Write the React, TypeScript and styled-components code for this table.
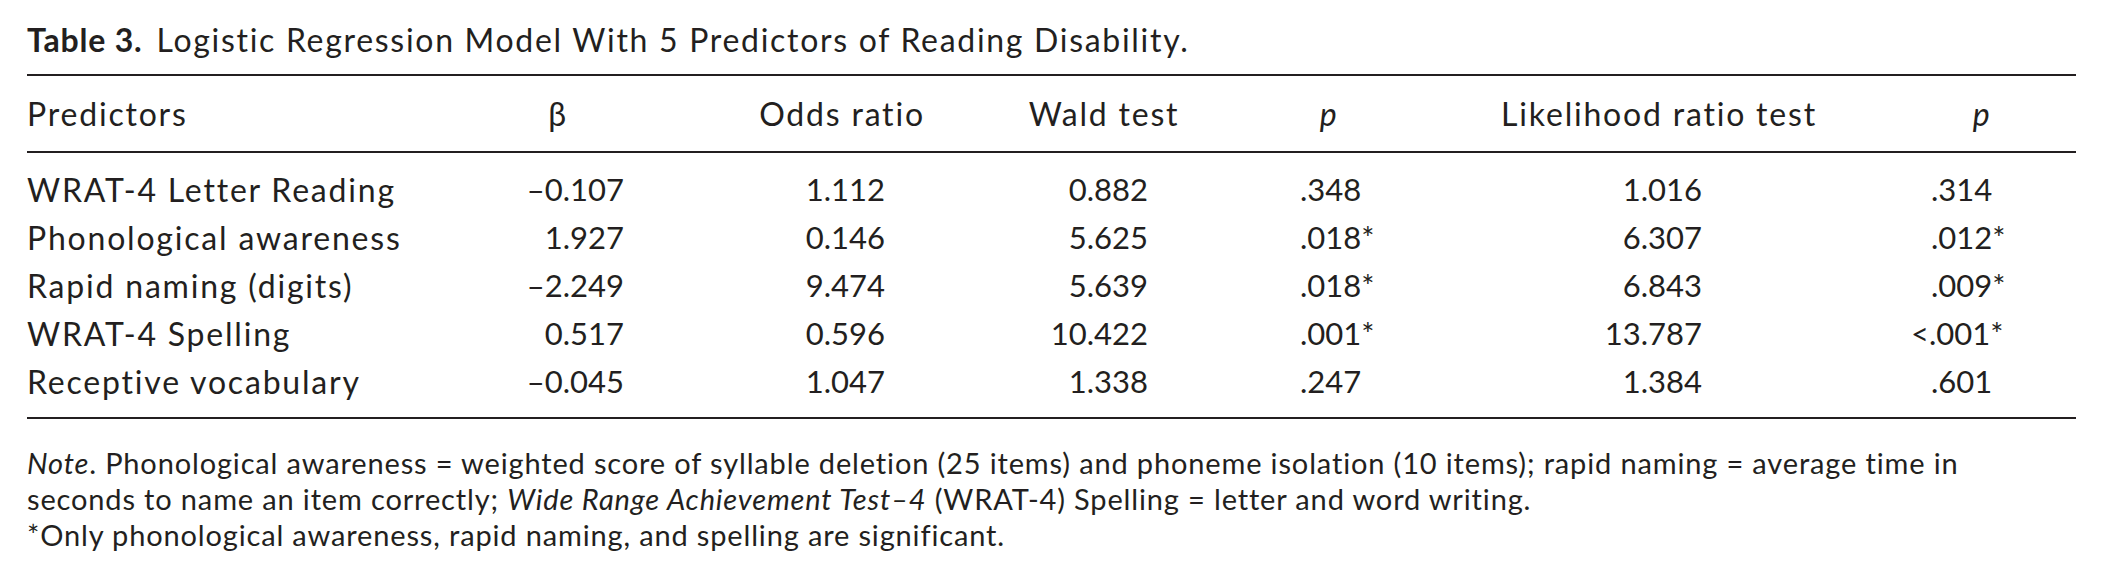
import React from 'react';
import styled, { createGlobalStyle } from 'styled-components';

const GlobalStyle = createGlobalStyle`
  html, body {
    margin: 0;
    padding: 0;
    background: #ffffff;
  }
  body {
    font-family: Lato, "Noto Sans", "Liberation Sans", sans-serif;
    color: #231f20;
  }
`;

type Align = 'left' | 'right' | 'center';

interface Col {
  head: Align;
  body: Align;
  pl?: number;
  pr?: number;
  hpl?: number;
}

// column widths follow the printed table, left edge to right rule
const widths = [443, 166, 402, 118, 330, 328, 262];

const cols: Col[] = [
  { head: 'left', body: 'left' },
  { head: 'center', body: 'right', pr: 12, hpl: 10 },
  { head: 'center', body: 'right', pr: 153, hpl: 10 },
  { head: 'center', body: 'right', pr: 8, hpl: 14 },
  { head: 'center', body: 'left', pl: 144, hpl: 16 },
  { head: 'center', body: 'right', pr: 112, hpl: 18 },
  { head: 'center', body: 'left', pl: 117, hpl: 74 },
];

const justify: Record<Align, string> = {
  left: 'flex-start',
  right: 'flex-end',
  center: 'center',
};

const rows: string[][] = [
  ['WRAT-4 Letter Reading', '–0.107', '1.112', '0.882', '.348', '1.016', '.314'],
  ['Phonological awareness', '1.927', '0.146', '5.625', '.018*', '6.307', '.012*'],
  ['Rapid naming (digits)', '–2.249', '9.474', '5.639', '.018*', '6.843', '.009*'],
  ['WRAT-4 Spelling', '0.517', '0.596', '10.422', '.001*', '13.787', '<.001*'],
  ['Receptive vocabulary', '–0.045', '1.047', '1.338', '.247', '1.384', '.601'],
];

const Page = styled.div`
  padding: 20px 26px 0 27px;
  width: 2049px;
`;

const Caption = styled.div`
  font-size: 32px;
  letter-spacing: 1.7px;
  line-height: 40px;
  height: 40px;
  margin-bottom: 14px;
  white-space: nowrap;
`;

const Label = styled.span`
  font-weight: 700;
  letter-spacing: 0.8px;
  margin-right: 14px;
`;

const Table = styled.div`
  border-top: 2px solid #231f20;
  border-bottom: 2px solid #231f20;
`;

const Row = styled.div<{ $head?: boolean }>`
  display: grid;
  grid-template-columns: ${widths.map((w) => `${w}px`).join(' ')};
  align-items: center;
  height: ${(p) => (p.$head ? 75 : 48)}px;
  white-space: nowrap;
`;

const Head = styled.div`
  border-bottom: 2px solid #231f20;
`;

const Body = styled.div`
  padding: 12px 0;
`;

const Cell = styled.div<{ $align: Align; $pl?: number; $pr?: number; $num?: boolean }>`
  display: flex;
  justify-content: ${(p) => justify[p.$align]};
  padding-left: ${(p) => p.$pl ?? 0}px;
  padding-right: ${(p) => p.$pr ?? 0}px;
  font-size: ${(p) => (p.$num ? 31 : 32)}px;
  letter-spacing: ${(p) => (p.$num ? 0 : 1.8)}px;
`;

const Em = styled.span`
  font-style: italic;
`;

const Hang = styled.span`
  margin-left: -20px;
`;

const Notes = styled.div`
  padding-top: 26px;
  font-size: 29px;
  letter-spacing: 0.85px;
  line-height: 36px;
  white-space: nowrap;
`;

function Value({ text }: { text: string }) {
  if (text.startsWith('<')) {
    return (
      <span>
        <Hang>&lt;</Hang>
        {text.slice(1)}
      </span>
    );
  }
  return <span>{text}</span>;
}

const headers: React.ReactNode[] = [
  'Predictors',
  'β',
  'Odds ratio',
  'Wald test',
  <Em key="p1">p</Em>,
  'Likelihood ratio test',
  <Em key="p2">p</Em>,
];

export default function App() {
  return (
    <>
      <GlobalStyle />
      <Page>
        <Caption>
          <Label>Table 3.</Label>
          Logistic Regression Model With 5 Predictors of Reading Disability.
        </Caption>
        <Table>
          <Head>
            <Row $head>
              {headers.map((h, i) => (
                <Cell key={i} $align={cols[i].head} $pl={cols[i].hpl}>
                  <span>{h}</span>
                </Cell>
              ))}
            </Row>
          </Head>
          <Body>
            {rows.map((r) => (
              <Row key={r[0]}>
                {r.map((v, i) => (
                  <Cell
                    key={i}
                    $num={i > 0}
                    $align={cols[i].body}
                    $pl={cols[i].pl}
                    $pr={cols[i].pr}
                  >
                    <Value text={v} />
                  </Cell>
                ))}
              </Row>
            ))}
          </Body>
        </Table>
        <Notes>
          <div>
            <Em>Note</Em>. Phonological awareness = weighted score of syllable deletion (25 items) and
            phoneme isolation (10 items); rapid naming = average time in
          </div>
          <div>
            seconds to name an item correctly; <Em>Wide Range Achievement Test–4</Em> (WRAT-4) Spelling
            = letter and word writing.
          </div>
          <div>*Only phonological awareness, rapid naming, and spelling are significant.</div>
        </Notes>
      </Page>
    </>
  );
}
